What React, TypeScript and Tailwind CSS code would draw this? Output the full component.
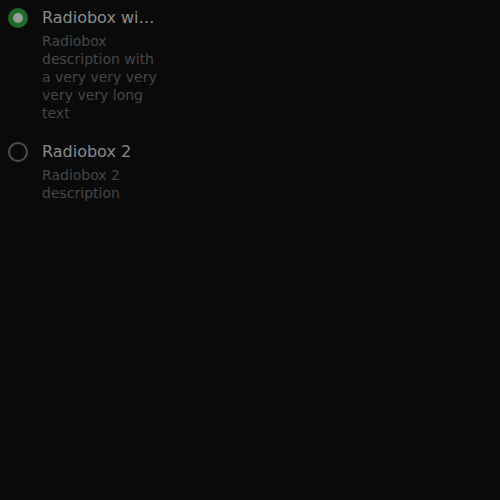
export default function App() {
  const items = [
    {
      label: "Radiobox with a very long label",
      description: "Radiobox description with a very very very very very long text",
      checked: true,
    },
    {
      label: "Radiobox 2",
      description: "Radiobox 2 description",
      checked: false,
    },
  ];

  return (
    <div className="min-h-[500px] w-[500px] bg-[#0a0a0a] p-2 font-['DejaVu_Sans',sans-serif]">
      <div className="flex flex-col gap-5">
        {items.map((item) => (
          <label key={item.label} className="flex items-start gap-3.5">
            <span
              className={
                item.checked
                  ? "flex h-5 w-5 shrink-0 items-center justify-center rounded-full bg-[#1d6a2a]"
                  : "flex h-5 w-5 shrink-0 items-center justify-center rounded-full border-2 border-[#4e4e4e]"
              }
            >
              {item.checked && <span className="h-2.5 w-2.5 rounded-full bg-[#9a9a9a]" />}
            </span>
            <div className="flex w-[116px] flex-col gap-1">
              <div className="truncate text-[16px] leading-5 text-[#8a8a8a]">{item.label}</div>
              <div className="text-[14px] leading-[18px] text-[#464646]">{item.description}</div>
            </div>
          </label>
        ))}
      </div>
    </div>
  );
}
